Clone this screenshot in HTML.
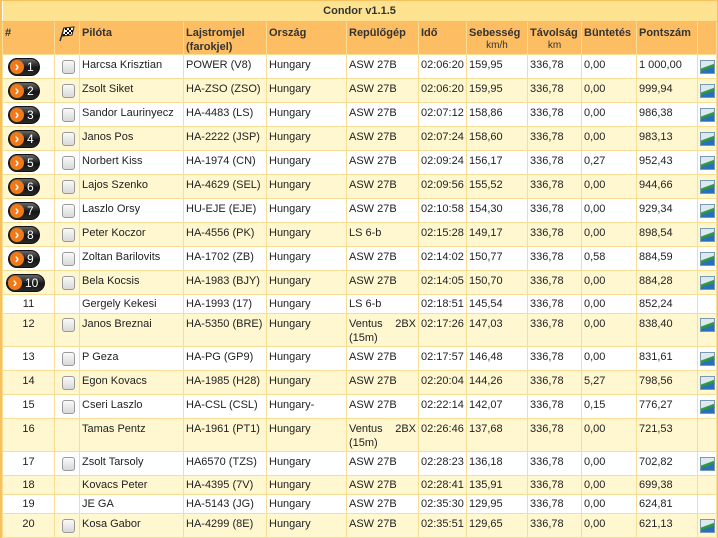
<!DOCTYPE html>
<html><head><meta charset="utf-8"><style>
*{margin:0;padding:0;box-sizing:border-box}
body{width:718px;height:538px;background:#fff;font-family:"Liberation Sans",Arial,sans-serif;font-size:11px;color:#222;overflow:hidden}
.wrap{width:718px;height:538px;border:2px solid #f7c25e;border-top:1px solid #f7c25e}
table{border-collapse:collapse;table-layout:fixed;width:714px}
td,th{border:1px solid #f8de94;vertical-align:top;padding:4px 2px 0 2px;white-space:nowrap;overflow:hidden}
.title td{background:#fde38f;height:20px;text-align:center;font-weight:bold;color:#333;padding-top:4px;border:none;border-bottom:1px solid #f7c25e}
.hd th{background:#fdbd62;height:33px;text-align:left;font-weight:bold;color:#333;padding-top:4px;line-height:14px}
.hd th small{display:block;text-align:center;font-weight:normal;font-size:10px;line-height:12px}
tr.a td{background:#fff}
tr.b td{background:#fef7cf}
tr.n td{height:24px}
tr.s td{height:19px;padding-top:3px}
tr.t td{height:33px;line-height:14px;padding-top:3px}
td.num{text-align:center}
td.bd{text-align:left;padding-left:5px;padding-top:3px}
.badge{display:inline-block;width:32px;height:18px;border-radius:9px;background:linear-gradient(#666,#151515 55%,#2a2a2a);border:1px solid #111;color:#fff;position:relative;text-align:left;padding-left:18px;line-height:16px;font-size:12px}
.badge:before{content:"›";position:absolute;left:1px;top:1px;width:14px;height:14px;border-radius:50%;background:#f07a1a;color:#fff;font-weight:bold;font-size:14px;line-height:12px;text-align:center}
.cb{display:inline-block;width:13px;height:14px;border:1px solid #999;border-radius:3px;background:linear-gradient(#fafafa,#d8d8d8);margin:1px 0 0 5px}
.ic{display:inline-block;width:15px;height:14px;margin-top:1px;background:linear-gradient(160deg,#dde8f0 0,#dde8f0 42%,#2a9a3a 48%,#2a9a3a 60%,#2a6ec0 65%,#2a6ec0 100%);border:1px solid #7a9ab0}
.j{display:flex;justify-content:space-between}
</style></head><body><div class="wrap">
<table>
<colgroup><col style="width:52px"><col style="width:25px"><col style="width:104px"><col style="width:83px"><col style="width:80px"><col style="width:72px"><col style="width:48px"><col style="width:61px"><col style="width:54px"><col style="width:55px"><col style="width:61px"><col style="width:19px"></colgroup>
<tr class="title"><td colspan="12">Condor v1.1.5</td></tr>
<tr class="hd"><th>#</th><th><svg width="18" height="16" viewBox="0 0 18 16"><line x1="3" y1="15" x2="7" y2="2" stroke="#333" stroke-width="1.5"/><path d="M7 2 L17 1 L15 9 L5 10 Z" fill="#fff" stroke="#222"/><path d="M8 2h2v2h-2zM12 2h2v2h-2zM10 4h2v2h-2zM14 4h2v2h-2zM8 6h2v2h-2zM12 6h2v2h-2zM6 8h2v2h-2zM10 8h2v2h-2z" fill="#111"/></svg></th><th>Pilóta</th><th>Lajstromjel<br>(farokjel)</th><th>Ország</th><th>Repülőgép</th><th>Idő</th><th>Sebesség<small>km/h</small></th><th>Távolság<small>km</small></th><th>Büntetés</th><th>Pontszám</th><th></th></tr>
<tr class="a n"><td class="bd"><span class="badge">1</span></td><td><span class="cb"></span></td><td>Harcsa Krisztian</td><td>POWER (V8)</td><td>Hungary</td><td>ASW 27B</td><td>02:06:20</td><td>159,95</td><td>336,78</td><td>0,00</td><td>1 000,00</td><td><span class="ic"></span></td></tr>
<tr class="b n"><td class="bd"><span class="badge">2</span></td><td><span class="cb"></span></td><td>Zsolt Siket</td><td>HA-ZSO (ZSO)</td><td>Hungary</td><td>ASW 27B</td><td>02:06:20</td><td>159,95</td><td>336,78</td><td>0,00</td><td>999,94</td><td><span class="ic"></span></td></tr>
<tr class="a n"><td class="bd"><span class="badge">3</span></td><td><span class="cb"></span></td><td>Sandor Laurinyecz</td><td>HA-4483 (LS)</td><td>Hungary</td><td>ASW 27B</td><td>02:07:12</td><td>158,86</td><td>336,78</td><td>0,00</td><td>986,38</td><td><span class="ic"></span></td></tr>
<tr class="b n"><td class="bd"><span class="badge">4</span></td><td><span class="cb"></span></td><td>Janos Pos</td><td>HA-2222 (JSP)</td><td>Hungary</td><td>ASW 27B</td><td>02:07:24</td><td>158,60</td><td>336,78</td><td>0,00</td><td>983,13</td><td><span class="ic"></span></td></tr>
<tr class="a n"><td class="bd"><span class="badge">5</span></td><td><span class="cb"></span></td><td>Norbert Kiss</td><td>HA-1974 (CN)</td><td>Hungary</td><td>ASW 27B</td><td>02:09:24</td><td>156,17</td><td>336,78</td><td>0,27</td><td>952,43</td><td><span class="ic"></span></td></tr>
<tr class="b n"><td class="bd"><span class="badge">6</span></td><td><span class="cb"></span></td><td>Lajos Szenko</td><td>HA-4629 (SEL)</td><td>Hungary</td><td>ASW 27B</td><td>02:09:56</td><td>155,52</td><td>336,78</td><td>0,00</td><td>944,66</td><td><span class="ic"></span></td></tr>
<tr class="a n"><td class="bd"><span class="badge">7</span></td><td><span class="cb"></span></td><td>Laszlo Orsy</td><td>HU-EJE (EJE)</td><td>Hungary</td><td>ASW 27B</td><td>02:10:58</td><td>154,30</td><td>336,78</td><td>0,00</td><td>929,34</td><td><span class="ic"></span></td></tr>
<tr class="b n"><td class="bd"><span class="badge">8</span></td><td><span class="cb"></span></td><td>Peter Koczor</td><td>HA-4556 (PK)</td><td>Hungary</td><td>LS 6-b</td><td>02:15:28</td><td>149,17</td><td>336,78</td><td>0,00</td><td>898,54</td><td><span class="ic"></span></td></tr>
<tr class="a n"><td class="bd"><span class="badge">9</span></td><td><span class="cb"></span></td><td>Zoltan Barilovits</td><td>HA-1702 (ZB)</td><td>Hungary</td><td>ASW 27B</td><td>02:14:02</td><td>150,77</td><td>336,78</td><td>0,58</td><td>884,59</td><td><span class="ic"></span></td></tr>
<tr class="b n"><td class="bd" style="padding-left:3px"><span class="badge" style="width:39px;padding-left:18px">10</span></td><td><span class="cb"></span></td><td>Bela Kocsis</td><td>HA-1983 (BJY)</td><td>Hungary</td><td>ASW 27B</td><td>02:14:05</td><td>150,70</td><td>336,78</td><td>0,00</td><td>884,28</td><td><span class="ic"></span></td></tr>
<tr class="a s"><td class="num">11</td><td></td><td>Gergely Kekesi</td><td>HA-1993 (17)</td><td>Hungary</td><td>LS 6-b</td><td>02:18:51</td><td>145,54</td><td>336,78</td><td>0,00</td><td>852,24</td><td></td></tr>
<tr class="b t"><td class="num">12</td><td><span class="cb"></span></td><td>Janos Breznai</td><td>HA-5350 (BRE)</td><td>Hungary</td><td><span class="j">Ventus<span>2BX</span></span>(15m)</td><td>02:17:26</td><td>147,03</td><td>336,78</td><td>0,00</td><td>838,40</td><td><span class="ic"></span></td></tr>
<tr class="a n"><td class="num">13</td><td><span class="cb"></span></td><td>P Geza</td><td>HA-PG (GP9)</td><td>Hungary</td><td>ASW 27B</td><td>02:17:57</td><td>146,48</td><td>336,78</td><td>0,00</td><td>831,61</td><td><span class="ic"></span></td></tr>
<tr class="b n"><td class="num">14</td><td><span class="cb"></span></td><td>Egon Kovacs</td><td>HA-1985 (H28)</td><td>Hungary</td><td>ASW 27B</td><td>02:20:04</td><td>144,26</td><td>336,78</td><td>5,27</td><td>798,56</td><td><span class="ic"></span></td></tr>
<tr class="a n"><td class="num">15</td><td><span class="cb"></span></td><td>Cseri Laszlo</td><td>HA-CSL (CSL)</td><td>Hungary-</td><td>ASW 27B</td><td>02:22:14</td><td>142,07</td><td>336,78</td><td>0,15</td><td>776,27</td><td><span class="ic"></span></td></tr>
<tr class="b t"><td class="num">16</td><td></td><td>Tamas Pentz</td><td>HA-1961 (PT1)</td><td>Hungary</td><td><span class="j">Ventus<span>2BX</span></span>(15m)</td><td>02:26:46</td><td>137,68</td><td>336,78</td><td>0,00</td><td>721,53</td><td></td></tr>
<tr class="a n"><td class="num">17</td><td><span class="cb"></span></td><td>Zsolt Tarsoly</td><td>HA6570 (TZS)</td><td>Hungary</td><td>ASW 27B</td><td>02:28:23</td><td>136,18</td><td>336,78</td><td>0,00</td><td>702,82</td><td><span class="ic"></span></td></tr>
<tr class="b s"><td class="num">18</td><td></td><td>Kovacs Peter</td><td>HA-4395 (7V)</td><td>Hungary</td><td>ASW 27B</td><td>02:28:41</td><td>135,91</td><td>336,78</td><td>0,00</td><td>699,38</td><td></td></tr>
<tr class="a s"><td class="num">19</td><td></td><td>JE GA</td><td>HA-5143 (JG)</td><td>Hungary</td><td>ASW 27B</td><td>02:35:30</td><td>129,95</td><td>336,78</td><td>0,00</td><td>624,81</td><td></td></tr>
<tr class="b n"><td class="num">20</td><td><span class="cb"></span></td><td>Kosa Gabor</td><td>HA-4299 (8E)</td><td>Hungary</td><td>ASW 27B</td><td>02:35:51</td><td>129,65</td><td>336,78</td><td>0,00</td><td>621,13</td><td><span class="ic"></span></td></tr>
</table></div></body></html>
